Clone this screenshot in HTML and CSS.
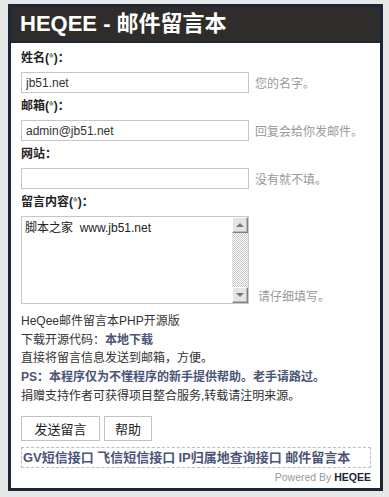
FILE: index.html
```html
<!DOCTYPE html>
<html lang="zh-CN">

<head>
  <meta charset="UTF-8" />
  <meta name="viewport" content="width=device-width, initial-scale=1.0" />
  <title>HEQEE - 邮件留言本</title>
  <link rel="stylesheet" href="styles.css">
</head>

<body>
  <div class="wrap">
    <div class="head">
      <h1>HEQEE - 邮件留言本</h1>
    </div>

    <form class="book">
      <label class="lbl">姓名(<em>*</em>)：</label>
      <div class="row">
        <input class="txt" type="text" value="jb51.net" />
        <span class="tip">您的名字。</span>
      </div>

      <label class="lbl">邮箱(<em>*</em>)：</label>
      <div class="row">
        <input class="txt" type="text" value="admin@jb51.net" />
        <span class="tip">回复会给你发邮件。</span>
      </div>

      <label class="lbl">网站：</label>
      <div class="row">
        <input class="txt" type="text" value="" />
        <span class="tip">没有就不填。</span>
      </div>

      <label class="lbl">留言内容(<em>*</em>)：</label>
      <div class="row row-area">
        <div class="area">
          <textarea>脚本之家  www.jb51.net</textarea>
          <div class="sbar">
            <span class="sb-btn up"></span>
            <span class="sb-track"></span>
            <span class="sb-btn down"></span>
          </div>
        </div>
        <span class="tip">请仔细填写。</span>
      </div>

      <div class="info">
        <p>HeQee邮件留言本PHP开源版</p>
        <p>下载开源代码：<b>本地下载</b></p>
        <p>直接将留言信息发送到邮箱，方便。</p>
        <p><b>PS：本程序仅为不懂程序的新手提供帮助。老手请路过。</b></p>
        <p>捐赠支持作者可获得项目整合服务,转载请注明来源。</p>
      </div>

      <div class="btns">
        <button type="button" class="btn send">发送留言</button>
        <button type="button" class="btn">帮助</button>
      </div>

      <div class="links">
        <a href="#">GV短信接口</a>
        <a href="#">飞信短信接口</a>
        <a href="#">IP归属地查询接口</a>
        <a href="#">邮件留言本</a>
      </div>

      <div class="power">Powered By <b>HEQEE</b></div>
    </form>
  </div>
</body>

</html>
```

FILE: styles.css
```css
* {
  margin: 0;
  padding: 0;
  box-sizing: border-box;
}

body {
  font-family: 'Liberation Sans', 'Noto Sans CJK SC', sans-serif;
  font-size: 12px;
  background-color: #e7e7e7;
  color: #333;
  padding: 4px 0 0 8px;
}

.wrap {
  width: 375px;
  background: #fff;
  border: 3px solid #1b2636;
}

.head {
  height: 36px;
  background: #2f2d2b;
  border-bottom: 2px solid #1b2636;
  padding-left: 9px;
}

.head h1 {
  font-size: 22px;
  line-height: 34px;
  color: #fff;
  font-weight: bold;
}

.book {
  padding: 6px 9px 1px 10px;
}

.lbl {
  display: block;
  line-height: 18px;
  font-weight: bold;
  color: #222;
}

.lbl em {
  font-style: normal;
  color: #7d9a7d;
}

.row {
  display: flex;
  align-items: center;
  margin: 5px 0 4px;
}

.txt {
  width: 228px;
  height: 21px;
  border: 1px solid #c6c6c6;
  padding: 0 4px;
  font-family: inherit;
  font-size: 12px;
  color: #333;
}

.tip {
  margin-left: 6px;
  color: #999;
}

.row-area {
  align-items: flex-end;
}

.row-area .tip {
  margin-left: 9px;
  line-height: 14px;
}

.area {
  display: flex;
  width: 228px;
  height: 88px;
  border: 1px solid #c6c6c6;
}

.area textarea {
  flex: 1;
  border: none;
  resize: none;
  outline: none;
  padding: 3px 3px;
  font-family: inherit;
  font-size: 12px;
  line-height: 16px;
  color: #222;
  white-space: pre-wrap;
}

/* classic scrollbar */
.sbar {
  width: 16px;
  display: flex;
  flex-direction: column;
}

.sb-track {
  flex: 1;
  background: repeating-conic-gradient(#c8c8c8 0 25%, #fff 0 50%) 0 0 / 2px 2px;
}

.sb-btn {
  height: 16px;
  background: #e4e4e4;
  border: 1px solid;
  border-color: #fff #808080 #808080 #fff;
  box-shadow: inset -1px -1px 0 #b8b8b8;
  display: flex;
  align-items: center;
  justify-content: center;
}

.sb-btn::after {
  content: "";
  border-left: 4px solid transparent;
  border-right: 4px solid transparent;
}

.sb-btn.up::after {
  border-bottom: 4px solid #777;
}

.sb-btn.down::after {
  border-top: 4px solid #777;
}

.info {
  margin-top: 8px;
}

.info p {
  line-height: 18.7px;
}

.info b {
  color: #4a5577;
}

.btns {
  display: flex;
  gap: 4px;
  margin-top: 10px;
}

.btn {
  height: 25px;
  padding: 0 10px;
  background: #fff;
  border: 1px solid #c2c2c2;
  font-family: inherit;
  font-size: 13px;
  color: #222;
}

.btn.send {
  width: 79px;
}

.links {
  margin-top: 6px;
  height: 21px;
  border: 1px dashed #bdbdbd;
  padding-left: 1px;
  line-height: 19px;
  white-space: nowrap;
}

.links a {
  font-size: 13px;
  font-weight: bold;
  color: #4b5477;
  text-decoration: none;
}

.power {
  text-align: right;
  font-size: 10.5px;
  line-height: 19px;
  color: #999;
}

.power b {
  color: #1b2636;
}
```
